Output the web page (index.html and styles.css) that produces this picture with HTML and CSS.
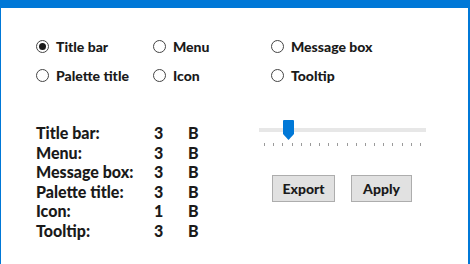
FILE: index.html
```html
<!DOCTYPE html>
<html lang="en">
<head>
    <meta charset="UTF-8">
    <title>Font settings</title>
    <link rel="stylesheet" href="styles.css">
</head>
<body>
    <div class="window">
        <div class="caption"></div>

        <!-- Element picker -->
        <div class="options">
            <label class="option"><span class="radio checked"></span>Title bar</label>
            <label class="option"><span class="radio"></span>Menu</label>
            <label class="option"><span class="radio"></span>Message box</label>
            <label class="option"><span class="radio"></span>Palette title</label>
            <label class="option"><span class="radio"></span>Icon</label>
            <label class="option"><span class="radio"></span>Tooltip</label>
        </div>

        <div class="lower">
            <!-- Current sizes -->
            <div class="sizes">
                <span>Title bar:</span><span>3</span><span>B</span>
                <span>Menu:</span><span>3</span><span>B</span>
                <span>Message box:</span><span>3</span><span>B</span>
                <span>Palette title:</span><span>3</span><span>B</span>
                <span>Icon:</span><span>1</span><span>B</span>
                <span>Tooltip:</span><span>3</span><span>B</span>
            </div>

            <div class="controls">
                <div class="slider">
                    <div class="track"></div>
                    <svg class="thumb" width="11" height="20" viewBox="0 0 11 20">
                        <path d="M1 0 H10 Q11 0 11 1 V14 L5.5 20 L0 14 V1 Q0 0 1 0 Z" fill="#0078d7"/>
                    </svg>
                    <div class="ticks" id="ticks"></div>
                </div>
                <div class="buttons">
                    <button class="btn export">Export</button>
                    <button class="btn apply">Apply</button>
                </div>
            </div>
        </div>
    </div>

    <script>
        // Tick marks under the slider
        const ticks = document.getElementById("ticks");
        for (let i = 0; i < 18; i++) {
            const t = document.createElement("span");
            ticks.appendChild(t);
        }
    </script>
</body>
</html>
```

FILE: styles.css
```css
body {
    margin: 0;
    font-family: Lato, "Liberation Sans", sans-serif;
    font-weight: 900;
    font-size: 14px;
    color: #1a1a1a;
    background: #ffffff;
}

.window {
    height: 264px;
    border-left: 1px solid #0078d7;
    border-right: 2px solid #0078d7;
    box-sizing: border-box;
    overflow: hidden;
}

.caption {
    height: 8px;
    background-color: #0078d7;
}

/* Radio grid */
.options {
    display: grid;
    grid-template-columns: 117px 118px 150px;
    grid-auto-rows: 29px;
    margin: 24px 0 0 35px;
}

.option {
    display: flex;
    align-items: center;
    gap: 7px;
}

.radio {
    width: 11px;
    height: 11px;
    border: 1px solid #444444;
    border-radius: 50%;
    display: flex;
    align-items: center;
    justify-content: center;
}

.radio.checked::after {
    content: "";
    width: 7px;
    height: 7px;
    border-radius: 50%;
    background-color: #1a1a1a;
}

/* Lower area */
.lower {
    display: flex;
    margin: 33px 0 0 35px;
}

.sizes {
    display: grid;
    grid-template-columns: 118px 34px 60px;
    font-size: 16px;
    line-height: 19.6px;
    width: 223px;
}

.controls {
    padding-top: 5px;
}

.slider {
    position: relative;
    width: 167px;
    height: 30px;
}

.track {
    position: absolute;
    top: 0;
    left: 0;
    right: 0;
    height: 4px;
    background-color: #e7e7e7;
}

.thumb {
    position: absolute;
    top: -8px;
    left: 24px;
}

.ticks {
    position: absolute;
    top: 15px;
    left: 5px;
    right: 5px;
    display: flex;
    justify-content: space-between;
}

.ticks span {
    width: 1px;
    height: 3px;
    background-color: #9a9a9a;
}

.buttons {
    display: flex;
    gap: 16px;
    margin: 17px 0 0 13px;
}

.btn {
    font-family: inherit;
    font-weight: 900;
    font-size: 14px;
    color: #1a1a1a;
    background-color: #e1e1e1;
    border: 1px solid #adadad;
    height: 27px;
    padding: 0;
}

.export {
    width: 63px;
}

.apply {
    width: 61px;
}
```
